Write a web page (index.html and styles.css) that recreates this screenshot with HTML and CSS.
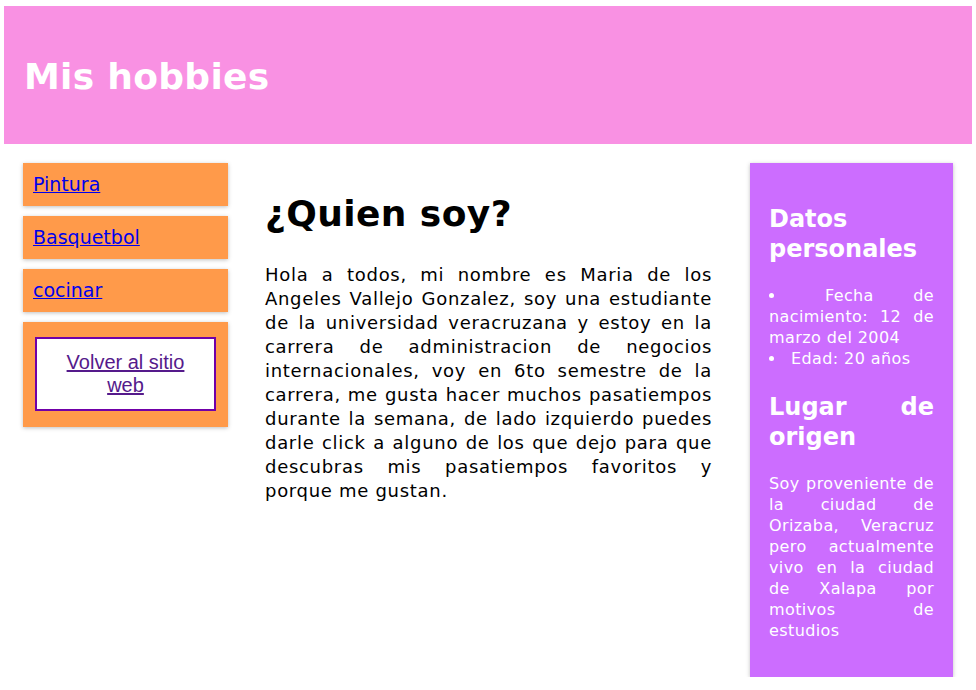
FILE: index.html
```html
<!DOCTYPE html>
<html lang="es">
<head>
<meta charset="utf-8">
<title>Mis hobbies</title>
<link rel="stylesheet" href="styles.css">
</head>
<body>
<header class="top">
  <h1 class="title">Mis hobbies</h1>
</header>
<div class="layout">
  <nav class="nav">
    <div class="nav-item"><a href="#pintura">Pintura</a></div>
    <div class="nav-item"><a href="#basquetbol">Basquetbol</a></div>
    <div class="nav-item"><a href="#cocinar">cocinar</a></div>
    <div class="nav-item nav-back">
      <div class="back-box"><a class="back-link" href="#">Volver al sitio web</a></div>
    </div>
  </nav>
  <main class="main">
    <h2 class="main-title">¿Quien soy?</h2>
    <p class="main-text">Hola a todos, mi nombre es Maria de los Angeles Vallejo Gonzalez, soy una estudiante de la universidad veracruzana y estoy en la carrera de administracion de negocios internacionales, voy en 6to semestre de la carrera, me gusta hacer muchos pasatiempos durante la semana, de lado izquierdo puedes darle click a alguno de los que dejo para que descubras mis pasatiempos favoritos y porque me gustan.</p>
  </main>
  <aside class="aside">
    <h3 class="aside-title">Datos personales</h3>
    <ul class="aside-list">
      <li>Fecha de nacimiento: 12 de marzo del 2004</li>
      <li>Edad: 20 años</li>
    </ul>
    <h3 class="aside-title">Lugar de origen</h3>
    <p class="aside-text">Soy proveniente de la ciudad de Orizaba, Veracruz pero actualmente vivo en la ciudad de Xalapa por motivos de estudios</p>
  </aside>
</div>
</body>
</html>
```
FILE: styles.css
```css
html, body { margin: 0; padding: 0; }
body {
  background: #ffffff;
  font-family: "DejaVu Sans", sans-serif;
  padding: 6px 4px 0 4px;
}
.top {
  background: #f991e3;
  height: 138px;
  display: flex;
  align-items: center;
  padding: 0 20px;
}
.title {
  margin: 2px 0 0 0;
  color: #ffffff;
  font-size: 36px;
  font-weight: bold;
  letter-spacing: 0.3px;
}
.layout {
  display: grid;
  grid-template-columns: 205px 447px 204px;
  column-gap: 37px;
  padding: 19px 0 0 19px;
  align-items: start;
}
.nav { display: flex; flex-direction: column; gap: 10px; }
.nav-item {
  background: #ff9a4a;
  box-shadow: 0 1px 4px rgba(0,0,0,0.25);
  padding: 10px 10px;
  font-size: 19px;
  line-height: 23px;
}
.nav-item a { color: #0000ee; }
.nav-back { padding: 15px 12px 16px 12px; }
.back-box {
  background: #ffffff;
  border: 2px solid #7000a8;
  padding: 12px 24px;
  text-align: center;
  font-family: "Liberation Sans", Arial, sans-serif;
  font-size: 20px;
  line-height: 23px;
}
.back-box a.back-link { color: #551a8b; }
.main { padding-top: 30px; }
.main-title {
  margin: 0 0 28px 0;
  font-size: 36px;
  line-height: 42px;
  font-weight: bold;
  color: #000;
  letter-spacing: 0.4px;
}
.main-text {
  margin: 0;
  font-size: 18px;
  line-height: 24px;
  letter-spacing: 0.7px;
  text-align: justify;
  color: #000;
}
.aside {
  margin-left: 1px;
  background: #cc6dff;
  color: #ffffff;
  box-shadow: 0 1px 4px rgba(0,0,0,0.25);
  padding: 41px 19px 36px 19px;
  min-height: 437px;
}
.aside-title {
  margin: 0;
  font-size: 24px;
  line-height: 30px;
  font-weight: bold;
  text-align: justify;
}
.aside-list {
  margin: 21px 0 23px 0;
  padding: 0;
  list-style: inside disc;
  font-size: 16px;
  line-height: 21px;
  letter-spacing: 0.4px;
  text-align: justify;
}
.aside-text {
  margin: 21px 0 0 0;
  font-size: 16px;
  line-height: 21px;
  letter-spacing: 0.4px;
  text-align: justify;
}
```
